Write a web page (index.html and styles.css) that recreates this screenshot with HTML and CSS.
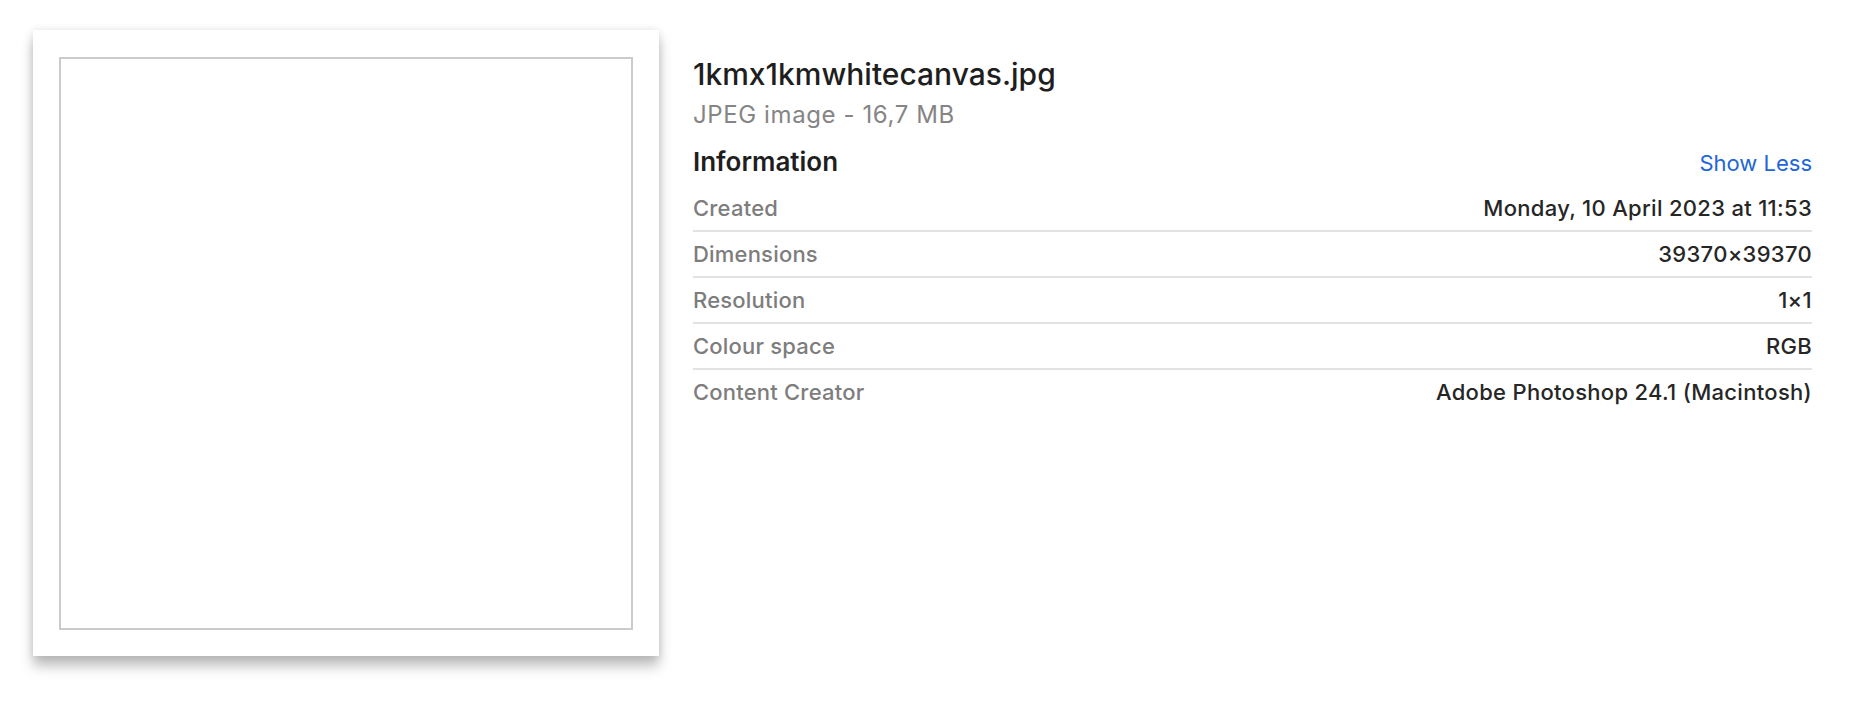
FILE: index.html
```html
<!DOCTYPE html>
<html lang="en">
<head>
<meta charset="utf-8">
<title>1kmx1kmwhitecanvas.jpg</title>
<link rel="stylesheet" href="styles.css">
</head>
<body>
<div class="page">
  <div class="thumb">
    <div class="thumb-inner"></div>
  </div>
  <div class="panel">
    <div class="title">1kmx1kmwhitecanvas.jpg</div>
    <div class="subtitle">JPEG image - 16,7 MB</div>
    <div class="section-head">
      <span class="section-title">Information</span>
      <span class="link">Show Less</span>
    </div>
    <div class="rows">
      <div class="row"><span class="label">Created</span><span class="value">Monday, 10 April 2023 at 11:53</span></div>
      <div class="row"><span class="label">Dimensions</span><span class="value">39370×39370</span></div>
      <div class="row"><span class="label">Resolution</span><span class="value">1×1</span></div>
      <div class="row"><span class="label">Colour space</span><span class="value">RGB</span></div>
      <div class="row"><span class="label">Content Creator</span><span class="value">Adobe Photoshop 24.1 (Macintosh)</span></div>
    </div>
  </div>
</div>
</body>
</html>
```

FILE: styles.css
```css
html, body {
  margin: 0;
  padding: 0;
  background: #ffffff;
}

body {
  font-family: "Inter", "Noto Sans", "Liberation Sans", sans-serif;
  color: #222222;
  min-height: 704px;
}

.page {
  display: flex;
  gap: 34px;
  padding: 30px 39px 48px 33px;
  align-items: flex-start;
}

.thumb {
  flex: 0 0 auto;
  width: 626px;
  height: 626px;
  box-sizing: border-box;
  padding: 27px 26px 26px 26px;
  background: #ffffff;
  box-shadow: 0 10px 12px rgba(0, 0, 0, 0.26), 0 0 8px rgba(0, 0, 0, 0.10);
}

.thumb-inner {
  width: 100%;
  height: 100%;
  box-sizing: border-box;
  border: 2px solid #cbcbcb;
  background: #ffffff;
}

.panel {
  flex: 1 1 auto;
  padding-top: 20px;
}

.title {
  font-size: 30px;
  font-weight: 500;
  line-height: 48px;
  color: #1e1e1e;
}

.subtitle {
  font-size: 24px;
  font-weight: 400;
  line-height: 34px;
  color: #858585;
  letter-spacing: 0.6px;
}

.section-head {
  display: flex;
  justify-content: space-between;
  align-items: baseline;
  padding-top: 6px;
  height: 48px;
  line-height: 48px;
}

.section-title {
  font-size: 26px;
  font-weight: 600;
  color: #1e1e1e;
}

.link {
  font-size: 22px;
  font-weight: 400;
  color: #2166d6;
}

.row {
  display: flex;
  justify-content: space-between;
  height: 44px;
  line-height: 44px;
  font-size: 22px;
  font-weight: 500;
  border-bottom: 2px solid #e2e2e2;
}

.row:last-child {
  border-bottom: none;
}

.label {
  color: #7d7d7d;
  letter-spacing: 0.2px;
}

.value {
  color: #262626;
  letter-spacing: 0.3px;
}
```
